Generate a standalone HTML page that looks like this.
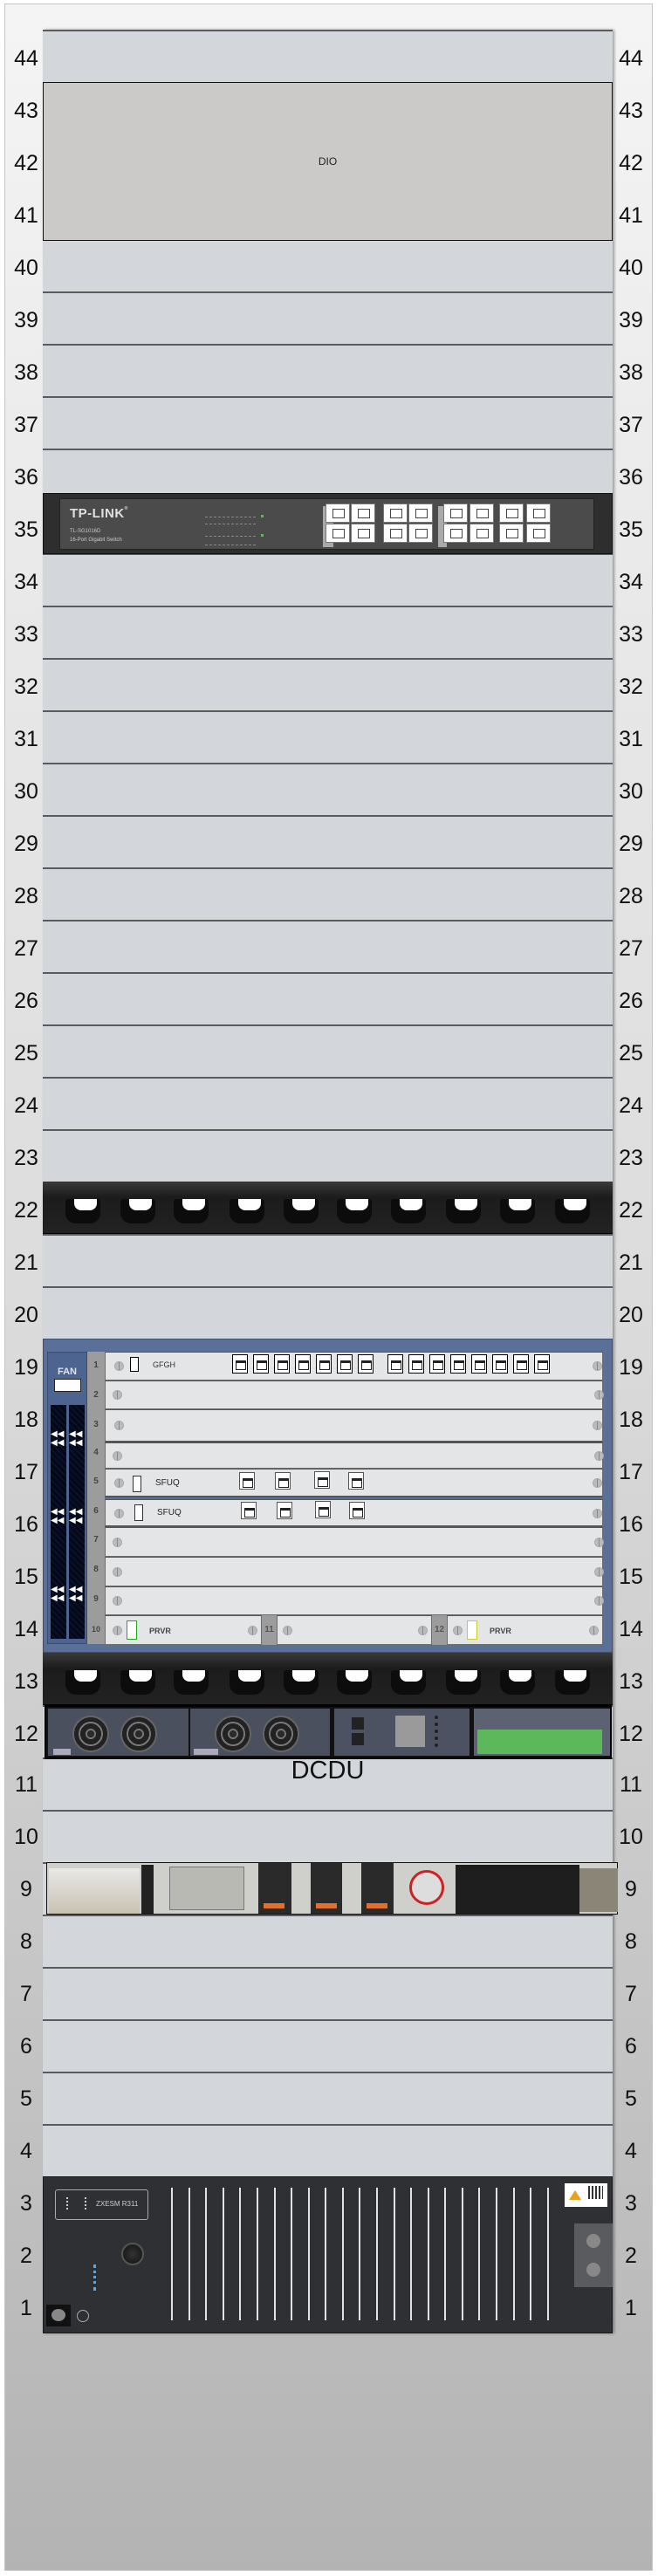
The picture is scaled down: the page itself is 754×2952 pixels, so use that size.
<!DOCTYPE html>
<html><head><meta charset="utf-8">
<style>
*{margin:0;padding:0;box-sizing:border-box}
body{width:754px;height:2952px;background:#fff;position:relative;overflow:hidden;font-family:"Liberation Sans",sans-serif}
div{position:absolute}
#frame{left:5px;top:4px;width:743px;height:2942px;border:1px solid #c4c4c4;background:linear-gradient(#f4f4f4,#dcdcdc 50%,#b3b3b3)}
#rack{left:49px;top:34px;width:653px;height:2640px;border-top:2px solid #5c5c5c;background:repeating-linear-gradient(to bottom,#d3d6da 0 58px,#5c5c5c 58px 60px);box-shadow:2px 0 3px rgba(0,0,0,.35)}
.l,.r{width:46px;text-align:center;font-size:25px;line-height:30px;color:#111}
.l{left:7px}.r{left:700px}
.tp{left:49px;top:565px;width:653px;height:70px;background:#2e2e2e;border:1px solid #111}
.tpi{left:18px;top:5px;width:613px;height:59px;background:#4b4b4b;border:1px solid #222}
.pt{width:28px;height:22px;background:#fff;border:1px solid #777}
.pt::after{content:"";position:absolute;left:7px;top:5px;width:12px;height:9px;border:1px solid #444}
.ch{left:49px;top:1534px;width:653px;height:360px;background:#5a7098;border:1px solid #3c4f70}
.fan{left:4px;top:14px;width:46px;height:335px;background:#4d6390;border:1px solid #3a4c72}
.mesh{top:60px;width:18px;height:268px;background:repeating-linear-gradient(45deg,#1f2d4a 0 3px,#4a619a 3px 5px),#1f2d4a;background-blend-mode:multiply}
.num{left:50px;top:14px;width:20px;height:335px;background:#9c9c9c}
.num span{position:absolute;left:0;width:20px;text-align:center;font-size:10px;font-weight:bold;color:#444}
.sl{left:70px;width:571px;background:#e4e5e7;border:1px solid #6d6d6d;border-top-color:#555}
.sc{width:11px;height:11px;border-radius:50%;background:#bbb;border:1px solid #aaa}
.sc::after{content:"";position:absolute;left:4px;top:0;width:1px;height:9px;background:#888}
.pp{width:18px;height:22px;background:#fff;border:1px solid #000}
.pp::after{content:"";position:absolute;left:3px;top:6px;width:10px;height:7px;border:1px solid #222;border-top-width:3px}
.cm{left:49px;width:653px;height:60px;background:linear-gradient(#3a3a3a,#1c1c1c 30%,#222);border-bottom:1px solid #000}
.h{top:20px;width:40px;height:28px;background:#0c0c0c;border-radius:3px 3px 12px 12px}
.h::after{content:"";position:absolute;right:4px;top:0;width:26px;height:13px;background:#fff;border-radius:0 0 8px 8px}
.fc{border-radius:50%}
.vl{top:12px;width:2px;height:152px;background:#e2e2e2}
</style></head><body>
<div id="frame"></div>
<div id="rack"></div>

<div class="l" style="top:52px">44</div><div class="r" style="top:52px">44</div>
<div class="l" style="top:112px">43</div><div class="r" style="top:112px">43</div>
<div class="l" style="top:172px">42</div><div class="r" style="top:172px">42</div>
<div class="l" style="top:232px">41</div><div class="r" style="top:232px">41</div>
<div class="l" style="top:292px">40</div><div class="r" style="top:292px">40</div>
<div class="l" style="top:352px">39</div><div class="r" style="top:352px">39</div>
<div class="l" style="top:412px">38</div><div class="r" style="top:412px">38</div>
<div class="l" style="top:472px">37</div><div class="r" style="top:472px">37</div>
<div class="l" style="top:532px">36</div><div class="r" style="top:532px">36</div>
<div class="l" style="top:592px">35</div><div class="r" style="top:592px">35</div>
<div class="l" style="top:652px">34</div><div class="r" style="top:652px">34</div>
<div class="l" style="top:712px">33</div><div class="r" style="top:712px">33</div>
<div class="l" style="top:772px">32</div><div class="r" style="top:772px">32</div>
<div class="l" style="top:832px">31</div><div class="r" style="top:832px">31</div>
<div class="l" style="top:892px">30</div><div class="r" style="top:892px">30</div>
<div class="l" style="top:952px">29</div><div class="r" style="top:952px">29</div>
<div class="l" style="top:1012px">28</div><div class="r" style="top:1012px">28</div>
<div class="l" style="top:1072px">27</div><div class="r" style="top:1072px">27</div>
<div class="l" style="top:1132px">26</div><div class="r" style="top:1132px">26</div>
<div class="l" style="top:1192px">25</div><div class="r" style="top:1192px">25</div>
<div class="l" style="top:1252px">24</div><div class="r" style="top:1252px">24</div>
<div class="l" style="top:1312px">23</div><div class="r" style="top:1312px">23</div>
<div class="l" style="top:1372px">22</div><div class="r" style="top:1372px">22</div>
<div class="l" style="top:1432px">21</div><div class="r" style="top:1432px">21</div>
<div class="l" style="top:1492px">20</div><div class="r" style="top:1492px">20</div>
<div class="l" style="top:1552px">19</div><div class="r" style="top:1552px">19</div>
<div class="l" style="top:1612px">18</div><div class="r" style="top:1612px">18</div>
<div class="l" style="top:1672px">17</div><div class="r" style="top:1672px">17</div>
<div class="l" style="top:1732px">16</div><div class="r" style="top:1732px">16</div>
<div class="l" style="top:1792px">15</div><div class="r" style="top:1792px">15</div>
<div class="l" style="top:1852px">14</div><div class="r" style="top:1852px">14</div>
<div class="l" style="top:1912px">13</div><div class="r" style="top:1912px">13</div>
<div class="l" style="top:1972px">12</div><div class="r" style="top:1972px">12</div>
<div class="l" style="top:2030px">11</div><div class="r" style="top:2030px">11</div>
<div class="l" style="top:2090px">10</div><div class="r" style="top:2090px">10</div>
<div class="l" style="top:2150px">9</div><div class="r" style="top:2150px">9</div>
<div class="l" style="top:2210px">8</div><div class="r" style="top:2210px">8</div>
<div class="l" style="top:2270px">7</div><div class="r" style="top:2270px">7</div>
<div class="l" style="top:2330px">6</div><div class="r" style="top:2330px">6</div>
<div class="l" style="top:2390px">5</div><div class="r" style="top:2390px">5</div>
<div class="l" style="top:2450px">4</div><div class="r" style="top:2450px">4</div>
<div class="l" style="top:2510px">3</div><div class="r" style="top:2510px">3</div>
<div class="l" style="top:2570px">2</div><div class="r" style="top:2570px">2</div>
<div class="l" style="top:2630px">1</div><div class="r" style="top:2630px">1</div>

<div style="left:49px;top:94px;width:653px;height:182px;background:#cbcac8;border:1px solid #111;text-align:center;line-height:180px;font-size:12px;color:#222">DIO</div>

<div class="tp"><div class="tpi">
 <div style="left:11px;top:8px;font-size:15px;font-weight:bold;color:#e0e0e0;letter-spacing:.5px">TP-LINK<span style="font-size:5px;vertical-align:top">®</span></div>
 <div style="left:11px;top:34px;font-size:6px;color:#ccc">TL-SG1016D</div>
 <div style="left:11px;top:44px;font-size:6px;color:#ccc">16-Port Gigabit Switch</div>
 <div style="left:166px;top:20px;width:58px;height:1px;border-top:1px dashed #888"></div>
 <div style="left:166px;top:28px;width:58px;height:1px;border-top:1px dashed #888"></div>
 <div style="left:166px;top:42px;width:58px;height:1px;border-top:1px dashed #888"></div>
 <div style="left:166px;top:52px;width:58px;height:1px;border-top:1px dashed #888"></div>
 <div style="left:230px;top:18px;width:3px;height:3px;background:#4c4"></div>
 <div style="left:230px;top:40px;width:3px;height:3px;background:#4c4"></div>
 <div style="left:301px;top:8px;width:12px;height:47px;background:#aaa"></div>
 <div style="left:433px;top:8px;width:10px;height:47px;background:#aaa"></div>
</div></div>
<div class="pt" style="left:373px;top:577px"></div><div class="pt" style="left:373px;top:600px"></div>
<div class="pt" style="left:402px;top:577px"></div><div class="pt" style="left:402px;top:600px"></div>
<div class="pt" style="left:439px;top:577px"></div><div class="pt" style="left:439px;top:600px"></div>
<div class="pt" style="left:468px;top:577px"></div><div class="pt" style="left:468px;top:600px"></div>
<div class="pt" style="left:508px;top:577px"></div><div class="pt" style="left:508px;top:600px"></div>
<div class="pt" style="left:538px;top:577px"></div><div class="pt" style="left:538px;top:600px"></div>
<div class="pt" style="left:572px;top:577px"></div><div class="pt" style="left:572px;top:600px"></div>
<div class="pt" style="left:603px;top:577px"></div><div class="pt" style="left:603px;top:600px"></div>

<div class="cm" style="top:1354px">
 <div class="h" style="left:26px"></div><div class="h" style="left:89px"></div><div class="h" style="left:150px"></div><div class="h" style="left:214px"></div><div class="h" style="left:276px"></div><div class="h" style="left:337px"></div><div class="h" style="left:399px"></div><div class="h" style="left:462px"></div><div class="h" style="left:524px"></div><div class="h" style="left:587px"></div>
</div>

<div class="ch">
 <div class="fan">
  <div style="left:0;top:16px;width:44px;text-align:center;font-size:11px;font-weight:bold;color:#dfe4ee">FAN</div>
  <div style="left:7px;top:30px;width:31px;height:15px;background:#fff;border:1px solid #222"></div>
  <div class="mesh" style="left:3px"></div><div class="mesh" style="left:24px"></div>
  <div style="left:3px;top:89px;font-size:10px;color:#fff;line-height:10px">◀◀<br>◀◀</div>
  <div style="left:24px;top:89px;font-size:10px;color:#fff;line-height:10px">◀◀<br>◀◀</div>
  <div style="left:3px;top:178px;font-size:10px;color:#fff;line-height:10px">◀◀<br>◀◀</div>
  <div style="left:24px;top:178px;font-size:10px;color:#fff;line-height:10px">◀◀<br>◀◀</div>
  <div style="left:3px;top:267px;font-size:10px;color:#fff;line-height:10px">◀◀<br>◀◀</div>
  <div style="left:24px;top:267px;font-size:10px;color:#fff;line-height:10px">◀◀<br>◀◀</div>
 </div>
 <div class="num">
  <span style="top:10px">1</span><span style="top:44px">2</span><span style="top:78px">3</span><span style="top:110px">4</span><span style="top:143px">5</span><span style="top:177px">6</span><span style="top:210px">7</span><span style="top:244px">8</span><span style="top:278px">9</span><span style="top:313px;font-size:9px">10</span>
 </div>
 <div class="sl" style="top:14px;height:33px"><div class="sc" style="left:10px;top:10px"></div><div style="left:28px;top:5px;width:10px;height:17px;background:#fff;border:1px solid #000"></div><div style="left:54px;top:9px;font-size:9px;color:#333">GFGH</div><div class="sc" style="left:558px;top:10px"></div></div>
 <div class="sl" style="top:47px;height:33px"><div class="sc" style="left:8px;top:10px"></div><div class="sc" style="left:560px;top:10px"></div></div>
 <div class="sl" style="top:80px;height:38px;border-bottom:2px solid #555"><div class="sc" style="left:10px;top:12px"></div><div class="sc" style="left:558px;top:12px"></div></div>
 <div class="sl" style="top:118px;height:30px"><div class="sc" style="left:8px;top:9px"></div><div class="sc" style="left:560px;top:9px"></div></div>
 <div class="sl" style="top:148px;height:33px;border-bottom:2px solid #555"><div class="sc" style="left:10px;top:10px"></div><div style="left:31px;top:7px;width:10px;height:19px;background:#fff;border:1px solid #333"></div><div style="left:57px;top:10px;font-size:10px;color:#222">SFUQ</div><div class="sc" style="left:558px;top:10px"></div></div>
 <div class="sl" style="top:183px;height:32px;border-bottom:2px solid #555"><div class="sc" style="left:10px;top:10px"></div><div style="left:33px;top:5px;width:10px;height:19px;background:#fff;border:1px solid #333"></div><div style="left:59px;top:9px;font-size:10px;color:#222">SFUQ</div><div class="sc" style="left:558px;top:10px"></div></div>
 <div class="sl" style="top:215px;height:34px"><div class="sc" style="left:8px;top:11px"></div><div class="sc" style="left:560px;top:11px"></div></div>
 <div class="sl" style="top:249px;height:34px"><div class="sc" style="left:8px;top:11px"></div><div class="sc" style="left:560px;top:11px"></div></div>
 <div class="sl" style="top:283px;height:33px"><div class="sc" style="left:8px;top:10px"></div><div class="sc" style="left:560px;top:10px"></div></div>
 <div class="sl" style="top:316px;height:34px;width:180px"><div class="sc" style="left:8px;top:11px"></div><div style="left:24px;top:5px;width:12px;height:22px;background:#fff;border:1px solid #2a2"></div><div style="left:50px;top:12px;font-size:9px;color:#444;font-weight:bold">PRVR</div><div class="sc" style="left:163px;top:11px"></div></div>
 <div style="left:250px;top:316px;width:17px;height:34px;background:#9c9c9c;font-size:10px;font-weight:bold;color:#555;line-height:34px;text-align:center">11</div>
 <div class="sl" style="left:267px;top:316px;height:34px;width:178px"><div class="sc" style="left:6px;top:11px"></div><div class="sc" style="left:161px;top:11px"></div></div>
 <div style="left:445px;top:316px;width:17px;height:34px;background:#9c9c9c;font-size:10px;font-weight:bold;color:#555;line-height:34px;text-align:center">12</div>
 <div class="sl" style="left:462px;top:316px;height:34px;width:179px"><div class="sc" style="left:6px;top:11px"></div><div style="left:22px;top:5px;width:12px;height:22px;background:#fff;border:1px solid #cc2"></div><div style="left:48px;top:12px;font-size:9px;color:#444;font-weight:bold">PRVR</div><div class="sc" style="left:162px;top:11px"></div></div>
</div>
<div class="pp" style="left:266px;top:1552px"></div><div class="pp" style="left:290px;top:1552px"></div><div class="pp" style="left:314px;top:1552px"></div><div class="pp" style="left:338px;top:1552px"></div><div class="pp" style="left:362px;top:1552px"></div><div class="pp" style="left:386px;top:1552px"></div><div class="pp" style="left:410px;top:1552px"></div>
<div class="pp" style="left:444px;top:1552px"></div><div class="pp" style="left:468px;top:1552px"></div><div class="pp" style="left:492px;top:1552px"></div><div class="pp" style="left:516px;top:1552px"></div><div class="pp" style="left:540px;top:1552px"></div><div class="pp" style="left:564px;top:1552px"></div><div class="pp" style="left:588px;top:1552px"></div><div class="pp" style="left:612px;top:1552px"></div>
<div class="pp" style="left:274px;top:1687px;height:20px;border-color:#555"></div><div class="pp" style="left:315px;top:1687px;height:20px;border-color:#555"></div><div class="pp" style="left:360px;top:1686px;height:20px;border-color:#555"></div><div class="pp" style="left:399px;top:1687px;height:20px;border-color:#555"></div>
<div class="pp" style="left:276px;top:1721px;height:20px;border-color:#555"></div><div class="pp" style="left:317px;top:1721px;height:20px;border-color:#555"></div><div class="pp" style="left:361px;top:1720px;height:20px;border-color:#555"></div><div class="pp" style="left:400px;top:1721px;height:20px;border-color:#555"></div>

<div class="cm" style="top:1894px">
 <div class="h" style="left:26px"></div><div class="h" style="left:89px"></div><div class="h" style="left:150px"></div><div class="h" style="left:214px"></div><div class="h" style="left:276px"></div><div class="h" style="left:337px"></div><div class="h" style="left:399px"></div><div class="h" style="left:462px"></div><div class="h" style="left:524px"></div><div class="h" style="left:587px"></div>
</div>

<div style="left:51px;top:1954px;width:650px;height:62px;background:#111;border:2px solid #000">
 <div style="left:2px;top:2px;width:161px;height:54px;background:#4b505e"><div class="fc" style="left:28px;top:8px;width:42px;height:42px;background:radial-gradient(circle,#2a2a2a 0 4px,#777 4px 6px,#222 6px 12px,#777 12px 14px,#222 14px 19px,#666 19px 21px)"></div><div class="fc" style="left:83px;top:8px;width:42px;height:42px;background:radial-gradient(circle,#2a2a2a 0 4px,#777 4px 6px,#222 6px 12px,#777 12px 14px,#222 14px 19px,#666 19px 21px)"></div><div style="left:6px;top:46px;width:20px;height:7px;background:#aab"></div></div>
 <div style="left:165px;top:2px;width:160px;height:54px;background:#4b505e"><div class="fc" style="left:28px;top:8px;width:42px;height:42px;background:radial-gradient(circle,#2a2a2a 0 4px,#777 4px 6px,#222 6px 12px,#777 12px 14px,#222 14px 19px,#666 19px 21px)"></div><div class="fc" style="left:83px;top:8px;width:42px;height:42px;background:radial-gradient(circle,#2a2a2a 0 4px,#777 4px 6px,#222 6px 12px,#777 12px 14px,#222 14px 19px,#666 19px 21px)"></div><div style="left:4px;top:46px;width:28px;height:7px;background:#aab"></div></div>
 <div style="left:330px;top:2px;width:155px;height:54px;background:#4d5262"><div style="left:20px;top:10px;width:14px;height:14px;background:#222"></div><div style="left:20px;top:28px;width:14px;height:14px;background:#222"></div><div style="left:70px;top:8px;width:34px;height:36px;background:#9a9a9a"></div><div style="left:115px;top:8px;width:6px;height:36px;border-left:4px dotted #222"></div></div>
 <div style="left:490px;top:2px;width:156px;height:54px;background:#5d6272"><div style="left:4px;top:24px;width:143px;height:28px;background:#5cb85a"></div></div>
</div>

<div style="left:49px;top:2014px;width:653px;height:30px;text-align:center;font-size:29px;line-height:30px;color:#111">DCDU</div>

<div style="left:53px;top:2134px;width:655px;height:60px;background:#cfcfcb;border:1px solid #111">
 <div style="left:2px;top:6px;width:104px;height:52px;background:linear-gradient(#e8e8e6,#c9c2b3)"></div>
 <div style="left:108px;top:2px;width:14px;height:56px;background:#222"></div>
 <div style="left:140px;top:4px;width:86px;height:50px;background:#b9b9b4;border:1px solid #777"></div>
 <div style="left:242px;top:0;width:38px;height:58px;background:#2a2a2a"><div style="left:6px;top:46px;width:24px;height:6px;background:#e2702a"></div></div>
 <div style="left:302px;top:0;width:36px;height:58px;background:#2a2a2a"><div style="left:6px;top:46px;width:24px;height:6px;background:#e2702a"></div></div>
 <div style="left:360px;top:0;width:37px;height:58px;background:#2a2a2a"><div style="left:6px;top:46px;width:24px;height:6px;background:#e2702a"></div></div>
 <div style="left:415px;top:8px;width:40px;height:40px;border-radius:50%;border:3px solid #c22;background:#ddd"></div>
 <div style="left:468px;top:2px;width:142px;height:56px;background:#1e1e1e"></div>
 <div style="left:610px;top:6px;width:44px;height:50px;background:#8a8577"></div>
</div>

<div style="left:49px;top:2494px;width:653px;height:180px;background:#2f3034;border:1px solid #1a1a1a">
 <div style="left:13px;top:14px;width:107px;height:35px;border:1px solid #aaa;border-radius:3px"><div style="left:46px;top:11px;font-size:8px;color:#ccc">ZXESM R311</div><div style="left:12px;top:8px;width:2px;height:14px;border-left:2px dotted #ccc"></div><div style="left:33px;top:8px;width:2px;height:14px;border-left:2px dotted #ccc"></div></div>
 <div style="left:89px;top:75px;width:26px;height:26px;border-radius:50%;background:radial-gradient(#333,#111);border:2px solid #555"></div>
 <div style="left:57px;top:100px;width:3px;height:30px;border-left:3px dotted #5ae"></div>
 <div style="left:3px;top:146px;width:28px;height:25px;background:#111"><div style="left:6px;top:5px;width:16px;height:14px;border-radius:50%;background:#888"></div></div>
 <div style="left:38px;top:152px;width:14px;height:14px;border-radius:50%;border:1px solid #aaa"></div>
 <div class="vl" style="left:146px"></div><div class="vl" style="left:166px"></div><div class="vl" style="left:185px"></div><div class="vl" style="left:205px"></div><div class="vl" style="left:224px"></div><div class="vl" style="left:244px"></div><div class="vl" style="left:264px"></div><div class="vl" style="left:283px"></div><div class="vl" style="left:303px"></div><div class="vl" style="left:322px"></div><div class="vl" style="left:342px"></div><div class="vl" style="left:361px"></div><div class="vl" style="left:381px"></div><div class="vl" style="left:401px"></div><div class="vl" style="left:420px"></div><div class="vl" style="left:440px"></div><div class="vl" style="left:459px"></div><div class="vl" style="left:479px"></div><div class="vl" style="left:498px"></div><div class="vl" style="left:518px"></div><div class="vl" style="left:538px"></div><div class="vl" style="left:557px"></div><div class="vl" style="left:577px"></div>
 <div style="left:597px;top:7px;width:49px;height:27px;background:#fff"><div style="left:5px;top:8px;width:0;height:0;border-left:7px solid transparent;border-right:7px solid transparent;border-bottom:11px solid #e9a21a"></div><div style="left:27px;top:3px;width:17px;height:15px;background:repeating-linear-gradient(90deg,#333 0 2px,#fff 2px 4px)"></div></div>
 <div style="left:608px;top:53px;width:44px;height:73px;background:#5a5b5e"><div style="left:14px;top:12px;width:16px;height:16px;border-radius:50%;background:#888"></div><div style="left:14px;top:45px;width:16px;height:16px;border-radius:50%;background:#888"></div></div>
</div>
</body></html>
